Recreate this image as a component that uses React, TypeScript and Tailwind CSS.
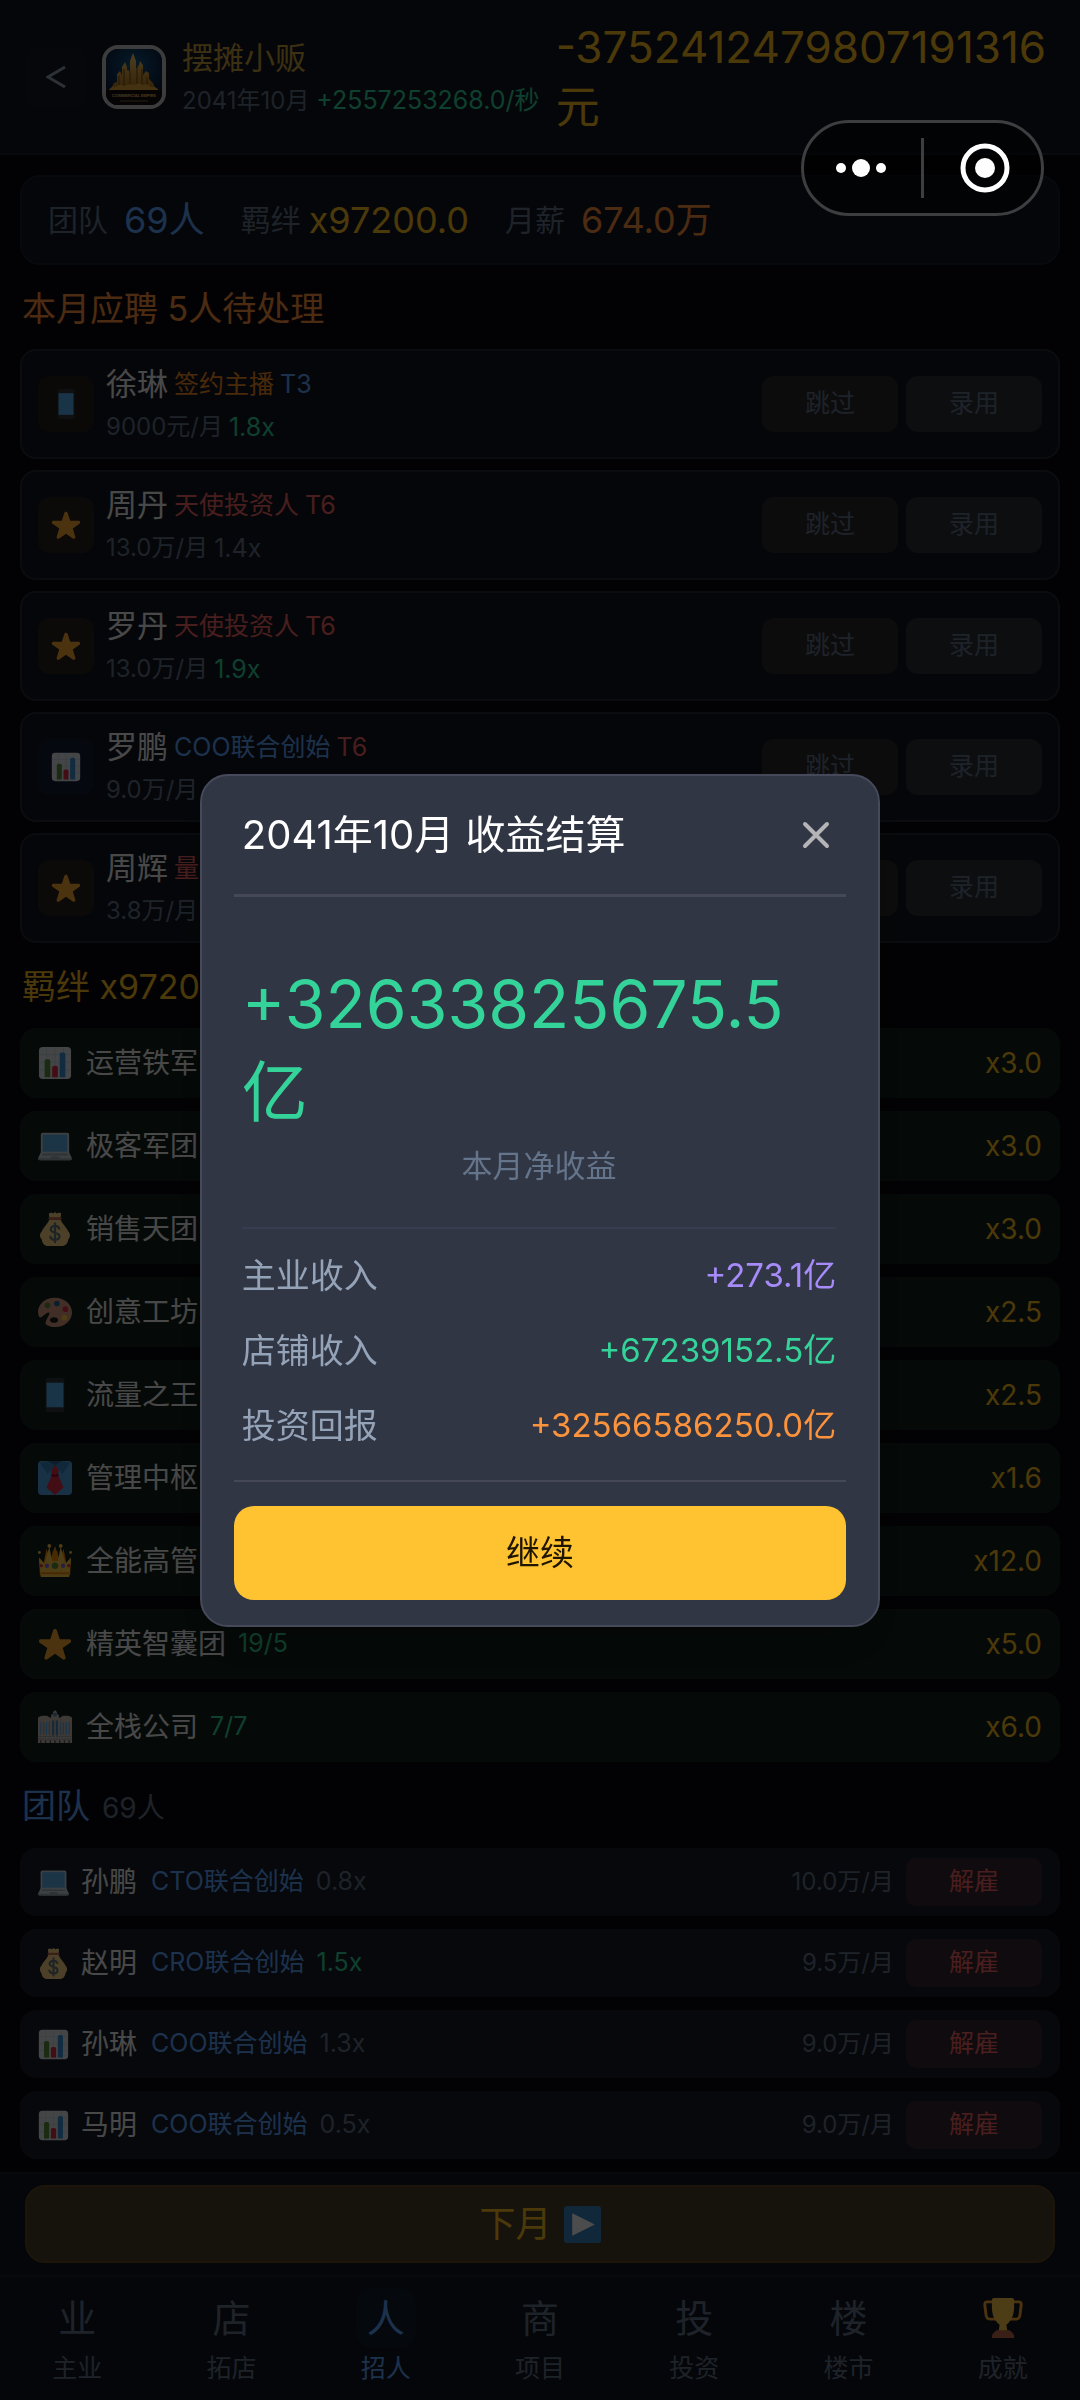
import React, { useState } from "react";

const applicants = [
    { name: "徐琳", role: "签约主播", roleColor: "text-[#f08a24]", tier: "T3", tierColor: "text-[#60a5fa]", salary: "9000元/月", rate: "1.8x", high: true, icon: "phone", tile: "bg-[#262119]" },
    { name: "周丹", role: "天使投资人", roleColor: "text-[#f06464]", tier: "T6", tierColor: "text-[#f06464]", salary: "13.0万/月", rate: "1.4x", high: false, icon: "star", tile: "bg-[#2a1f21]" },
    { name: "罗丹", role: "天使投资人", roleColor: "text-[#f06464]", tier: "T6", tierColor: "text-[#f06464]", salary: "13.0万/月", rate: "1.9x", high: true, icon: "star", tile: "bg-[#2a1f21]" },
    { name: "罗鹏", role: "COO联合创始", roleColor: "text-[#60a5fa]", tier: "T6", tierColor: "text-[#f06464]", salary: "9.0万/月", rate: "", high: false, icon: "chart", tile: "bg-[#161d36]" },
    { name: "周辉", role: "量化", roleColor: "text-[#f06464]", tier: "", tierColor: "", salary: "3.8万/月", rate: "", high: false, icon: "star", tile: "bg-[#2a1f21]" },
];

const bonds = [
    { icon: "chart", name: "运营铁军", count: "", value: "x3.0" },
    { icon: "laptop", name: "极客军团", count: "", value: "x3.0" },
    { icon: "money", name: "销售天团", count: "", value: "x3.0" },
    { icon: "palette", name: "创意工坊", count: "", value: "x2.5" },
    { icon: "phone", name: "流量之王", count: "", value: "x2.5" },
    { icon: "tie", name: "管理中枢", count: "", value: "x1.6" },
    { icon: "crown", name: "全能高管团", count: "", value: "x12.0" },
    { icon: "star", name: "精英智囊团", count: "19/5", value: "x5.0" },
    { icon: "city", name: "全栈公司", count: "7/7", value: "x6.0" },
];

const team = [
    { icon: "laptop", name: "孙鹏", role: "CTO联合创始", rate: "0.8x", high: false, salary: "10.0万/月" },
    { icon: "money", name: "赵明", role: "CRO联合创始", rate: "1.5x", high: true, salary: "9.5万/月" },
    { icon: "chart", name: "孙琳", role: "COO联合创始", rate: "1.3x", high: false, salary: "9.0万/月" },
    { icon: "chart", name: "马明", role: "COO联合创始", rate: "0.5x", high: false, salary: "9.0万/月" },
];

const tabs = [
    { mark: "业", label: "主业" },
    { mark: "店", label: "拓店" },
    { mark: "人", label: "招人" },
    { mark: "商", label: "项目" },
    { mark: "投", label: "投资" },
    { mark: "楼", label: "楼市" },
    { mark: "", label: "成就" },
];

const income = [
    { label: "主业收入", value: "+273.1亿", color: "text-[#a78bfa]" },
    { label: "店铺收入", value: "+67239152.5亿", color: "text-[#34d399]" },
    { label: "投资回报", value: "+32566586250.0亿", color: "text-[#fb923c]" },
];

const drawings: Record<string, React.ReactNode> = {
    star: (
        <path fill="#FFAC33" d="M27.287 34.627c-.404 0-.806-.124-1.152-.371L18 28.422l-8.135 5.834c-.343.247-.75.371-1.148.371-.405 0-.81-.125-1.154-.37-.699-.51-.992-1.412-.722-2.235l3.034-9.792-8.062-5.681c-.696-.508-.985-1.41-.714-2.231.269-.821 1.038-1.376 1.903-1.376l9.931-.014 3.164-9.486C16.34 2.617 17.13 2 18 2s1.66.617 1.903 1.442l3.164 9.486 9.931.014c.865 0 1.634.555 1.903 1.376.271.821-.018 1.723-.714 2.231l-8.062 5.681 3.034 9.792c.27.823-.023 1.725-.722 2.235-.344.245-.748.37-1.148.37z" />
    ),
    phone: (
        <>
            <rect x="8" y="0" width="20" height="36" rx="3" fill="#31373D" />
            <rect x="9" y="5" width="18" height="26" fill="#55ACEE" />
        </>
    ),
    chart: (
        <>
            <rect x="1" y="1" width="34" height="34" rx="4" fill="#E1E8ED" />
            <path d="M1 9h34M1 17h34M1 25h34M9 1v34M18 1v34M27 1v34" stroke="#CCD6DD" strokeWidth="1" />
            <path fill="#5C913B" d="M13 33H7V16c0-1.1.9-2 2-2h2c1.1 0 2 .9 2 2z" />
            <path fill="#DD2E44" d="M21 33h-6V23c0-1.1.9-2 2-2h2c1.1 0 2 .9 2 2z" />
            <path fill="#3B94D9" d="M29 33h-6V9c0-1.1.9-2 2-2h2c1.1 0 2 .9 2 2z" />
        </>
    ),
    laptop: (
        <>
            <path fill="#CCD6DD" d="M33 28H3V6a2 2 0 0 1 2-2h26a2 2 0 0 1 2 2z" />
            <path fill="#5DADEC" d="M5 6h26v18H5z" />
            <path fill="#CCD6DD" d="M33 25H3l-3 6c0 1 .8 2 2 2h32c1.2 0 2-1 2-2z" />
            <path fill="#9AAAB4" d="M5 26h26l1 2H4zM14 29h8l1 2H13zM0 31h36c0 1-.8 2-2 2H2c-1.2 0-2-1-2-2z" />
        </>
    ),
    money: (
        <>
            <path fill="#FDD888" d="M31.9 20.3c-1.4-3.6-6.600-8.400-7.900-12.300H12c-1.300 3.900-6.500 8.700-7.900 12.300C1.500 23 1.500 26.500 4 29c.3 3.700 2.600 7 7 7h14c4.400 0 6.700-3.300 7-7 2.500-2.500 2.500-6-.1-8.700z" />
            <path fill="#FDD888" d="M11.5 1.500 14 .5 16 1.500 18 0l2 1.500L22.500.5 24.500 1.500 24 6H12z" />
            <rect x="11" y="5.5" width="14" height="2.6" rx="1.3" fill="#BF6952" />
            <path d="M22.500 17.500c-.7-2-2.500-2.800-4.500-2.800-2.600 0-4.500 1.400-4.500 3.600 0 5.200 9.200 2.200 9.200 7.400 0 2.300-2 3.700-4.700 3.700-2.500 0-4.400-1-4.900-3.300M18 12v20" fill="none" stroke="#67757F" strokeWidth="2.4" strokeLinecap="round" />
        </>
    ),
    palette: (
        <>
            <path fill="#D99E82" d="M18 3C8 3 0 9.500 0 18c0 1.700.4 3.500 1.200 5 1 1.800 3 .3 5-1.500 2.300-2 4.600-3.500 5.500-3 1.300 1-.5 3.500-2 6.500-1.400 2.700-3 5.700 0 7 2.700 1.300 5.600 2 8.300 2 10 0 18-7 18-15.500S28 3 18 3z" />
            <ellipse cx="17" cy="26.5" rx="4.3" ry="3" fill="#16201b" />
            <circle cx="10" cy="11" r="3" fill="#5C913B" />
            <circle cx="20" cy="9" r="3" fill="#226699" />
            <circle cx="29" cy="15" r="3" fill="#DD2E44" />
            <circle cx="28" cy="24" r="3" fill="#FFCC4D" />
        </>
    ),
    tie: (
        <>
            <rect width="36" height="36" rx="4" fill="#50A5E6" />
            <path fill="#2A6797" d="M10 0h16l-8 5z" />
            <path fill="#3B88C3" d="M2 2 9 0l9 5-8 9zM34 2l-7-2-9 5 8 9z" />
            <path fill="#DD2E44" d="m18 4 4 6-1 4 6 14-9 8-9-8 6-14-1-4z" />
            <path fill="#A0041E" d="m15 13 3 2 3-2 1 3-4 1-4-1z" />
        </>
    ),
    crown: (
        <>
            <path fill="#F4900C" d="m2 33-1-17 5 4 3-15 4 12 5-15 5 15 4-12 3 15 5-4-1 17z" />
            <path fill="#FFCC4D" d="m3 35-2-21 6 7 5-18 3 15h6l3-15 5 18 6-7-2 21z" />
            <path fill="#F4900C" d="M15 8h6l-3 10zM3 30h30v2H3z" />
            <g fill="#FFCC4D"><circle cx="1.5" cy="9" r="1.5" /><circle cx="12" cy="2" r="2" /><circle cx="24" cy="2" r="2" /><circle cx="34.5" cy="9" r="1.5" /></g>
            <circle cx="18" cy="23" r="3.5" fill="#5C913B" />
            <g fill="#9266CC"><circle cx="9.5" cy="23" r="2.3" /><circle cx="26.5" cy="23" r="2.3" /></g>
            <g fill="#DD2E44"><circle cx="3.5" cy="23" r="1.7" /><circle cx="32.5" cy="23" r="1.7" /></g>
        </>
    ),
    city: (
        <>
            <path fill="#CCBFB5" d="M0 9q0-2 2-2l2-1h6l2 2h2V5l2-1V2l2-2 2 2v2l2 1v3h2l2-2h6l2 1q2 0 2 2v26H0z" />
            <path d="M3 13v13M6 13v13M9 13v13M12 13v13M24 13v13M27 13v13M30 13v13M33 13v13" stroke="#55ACEE" strokeWidth="1.2" />
            <path d="M16 11v16M20 11v16" stroke="#4289C1" strokeWidth="2.2" />
            <path d="M1 28h34M1 31h34" stroke="#8899A6" strokeWidth="1.2" strokeDasharray="2 1" />
            <path d="M3 32v3M8 32v3M13 32v3M18 32v3M23 32v3M28 32v3M33 32v3" stroke="#66564c" strokeWidth="1.5" />
            <circle cx="18" cy="5" r="2" fill="#4289C1" />
        </>
    ),
    play: (
        <>
            <rect width="36" height="36" rx="3" fill="#3B88C3" />
            <path fill="#FFFFFF" d="M8 7v22l22-11z" />
        </>
    ),
    trophy: (
        <>
            <path fill="none" stroke="#FFAC33" strokeWidth="2.6" strokeLinejoin="round" d="M10 3.500H3.500C1.500 3.500 1.500 5 1.700 7l1 8c.3 2.500 1.300 4 3.300 4h6M26 3.500h6.500c2 0 2 1.500 1.800 3.500l-1 8c-.3 2.500-1.300 4-3.300 4h-6" />
            <path fill="#FFCC4D" d="M8 2q0-2 2-2h16q2 0 2 2v6c0 8-3 13-7 16l1 6h-8l1-6C11 21 8 16 8 8z" />
            <path fill="#C1694F" d="M12 29h12l3 3 1 2v2H8v-2l1-2z" />
        </>
    ),
};

const Icon = ({ name, className }: { name: string; className: string }) => (
    <svg viewBox="0 0 36 36" className={`shrink-0 ${className}`} aria-hidden="true">
        {drawings[name]}
    </svg>
);

const Logo = () => (
    <svg viewBox="0 0 56 56" className="size-full" role="img" aria-label="Commercial Empire">
        <defs>
            <radialGradient id="sky" cx="50%" cy="30%" r="70%">
                <stop offset="0" stopColor="#175a8c" />
                <stop offset="1" stopColor="#06122e" />
            </radialGradient>
            <linearGradient id="gold" x1="0" y1="0" x2="0" y2="1">
                <stop offset="0" stopColor="#ffd873" />
                <stop offset="1" stopColor="#a9690f" />
            </linearGradient>
        </defs>
        <rect width="56" height="56" fill="url(#sky)" />
        <path fill="url(#gold)" d="M4 42 8 34l3-1v-8l3-3 2 4v-8l3-5 2 5v3l3 1V12l3-8 3 8v8l3-4 1-4 3 4v10l3-4 3 2v6l4 4 4 10z" />
        <path stroke="#7a4c10" strokeWidth="1" d="M13 27v12M18 20v18M24 22v16M31 16v22M36 20v18M41 28v10" />
        <path fill="#e5a63a" d="M2 42q4-6 8-4 4-4 8-1 5-3 10-1 5-3 9 0 5-2 8 2 5-1 8 4z" />
        <rect y="41" width="56" height="15" fill="#120d0c" />
        <text x="28" y="48" textAnchor="middle" fontSize="4" fontWeight="700" fill="#e0b870">COMMERCIAL EMPIRE</text>
        <path d="M14 52h28" stroke="#7d6740" strokeWidth="1" />
    </svg>
);

const Header = () => (
    <header className="flex items-center border-b-2 border-[#1f242e] bg-[#11161f] h-[155px] pl-[26px] pr-8 shrink-0">
        <button aria-label="返回" className="size-[60px] shrink-0 rounded-xl bg-[#171a24] flex items-center justify-center">
            <svg viewBox="0 0 20 24" className="w-5 h-6" fill="none" stroke="#94a3b8" strokeWidth="3">
                <path d="M19 2 2 12l17 10" />
            </svg>
        </button>
        <div className="size-16 ml-4 shrink-0 rounded-2xl border-4 border-[#c8c8c8] overflow-hidden">
            <Logo />
        </div>
        <div className="ml-4 pt-2 whitespace-nowrap">
            <h1 className="text-[31px] leading-10 text-[#c9a03f]">摆摊小贩</h1>
            <p className="text-2xl leading-[44px] text-[#64748b]">
                2041年10月 <span className="text-[25px] text-[#34d399]">+2557253268.0/秒</span>
            </p>
        </div>
        <div className="ml-4 flex-1 text-[44px] leading-[60px] text-[#fbbf24]">-3752412479807191316元</div>
    </header>
);

const Summary = () => (
    <section className="flex items-center h-[90px] rounded-[20px] border-2 border-[#141f2e] bg-[#0e1621] px-[26px] text-[30px] text-[#64748b]">
        <span>团队</span>
        <span className="ml-4 text-4xl text-[#60a5fa]">69人</span>
        <span className="ml-9">羁绊</span>
        <span className="ml-2 text-4xl text-[#fbbf24]">x97200.0</span>
        <span className="ml-9">月薪</span>
        <span className="ml-4 text-4xl text-[#fb923c]">674.0万</span>
    </section>
);

const Applicants = () => (
    <section>
        <h2 className="mt-[19px] text-[34px] leading-[50px] text-[#fb923c] px-0.5">本月应聘 5人待处理</h2>
        <ul className="mt-[15px] space-y-[11px]">
            {applicants.map((item) => (
                <li key={item.name} className="flex items-center h-[110px] rounded-2xl border-2 border-[#222a33] bg-[#11161f] px-4">
                    <div className={`size-14 rounded-xl flex items-center justify-center ${item.tile}`}>
                        <Icon name={item.icon} className="size-[30px]" />
                    </div>
                    <div className="ml-3 pt-0.5 flex-1">
                        <p className="flex items-center gap-1.5 leading-[44px] text-[25px]">
                            <span className="text-[31px] text-[#f0f0f0]">{item.name}</span>
                            <span className={item.roleColor}>{item.role}</span>
                            <span className={item.tierColor}>{item.tier}</span>
                        </p>
                        <p className="flex items-center gap-1.5 leading-[42px] text-2xl text-[#64748b]">
                            {item.salary}
                            <span className={item.high ? "text-[25px] text-[#34d399]" : "text-[25px]"}>{item.rate}</span>
                        </p>
                    </div>
                    <button className="w-[136px] h-14 rounded-xl bg-[#2a2a2d] text-[25px] text-[#64748b]">跳过</button>
                    <button className="ml-2 w-[136px] h-14 rounded-xl bg-[#2b2f38] text-[25px] text-[#64748b]">录用</button>
                </li>
            ))}
        </ul>
    </section>
);

const Bonds = () => (
    <section>
        <h2 className="mt-[19px] text-[34px] leading-[50px] text-[#fbbf24] px-0.5">羁绊 x97200.0</h2>
        <ul className="mt-4 space-y-[13px]">
            {bonds.map((bond) => (
                <li key={bond.name} className="flex items-center h-[70px] rounded-2xl bg-[#111f1a] px-[18px] text-[28px]">
                    <Icon name={bond.icon} className="size-[34px]" />
                    <span className="ml-3.5 text-[#f0f0f0]">{bond.name}</span>
                    <span className="ml-3 text-[25px] text-[#34d399]">{bond.count}</span>
                    <span className="ml-auto text-[#fbbf24]">{bond.value}</span>
                </li>
            ))}
        </ul>
    </section>
);

const Team = () => (
    <section>
        <h2 className="mt-[19px] text-[34px] leading-[50px] text-[#60a5fa] px-0.5">
            团队<span className="ml-3 text-[28px] text-[#64748b]">69人</span>
        </h2>
        <ul className="mt-[15px] space-y-[13px]">
            {team.map((member) => (
                <li key={member.name} className="flex items-center h-[68px] rounded-2xl bg-[#171c26] px-[18px] text-[25px]">
                    <Icon name={member.icon} className="size-[31px]" />
                    <span className="ml-3 text-[28px] text-[#f0f0f0]">{member.name}</span>
                    <span className="ml-3.5 text-[#60a5fa]">{member.role}</span>
                    <span className={`ml-3 ${member.high ? "text-[#34d399]" : "text-[#64748b]"}`}>{member.rate}</span>
                    <span className="ml-auto text-2xl text-[#64748b]">{member.salary}</span>
                    <button className="ml-3 w-[136px] h-12 rounded-[10px] bg-[#382530] text-[#f06464]">解雇</button>
                </li>
            ))}
            <li className="h-[68px] rounded-2xl bg-[#171c26]" />
        </ul>
    </section>
);

const BottomBar = () => {
    const [active, setActive] = useState("招人");

    return (
        <footer className="shrink-0 bg-[#11161f]">
            <div className="border-t-2 border-[#1c212a] px-[25px] pt-[11px] pb-3">
                <button className="w-full h-[78px] rounded-[20px] border-2 border-[#62491f] bg-[#4b3e28] flex items-center justify-center gap-3 text-4xl text-[#fbbf24]">
                    下月
                    <Icon name="play" className="size-[37px]" />
                </button>
            </div>
            <nav className="flex border-t-2 border-[#1c212a] pt-[11px] pb-3">
                {tabs.map((tab) => {
                    const on = tab.label === active;
                    return (
                        <button key={tab.label} onClick={() => setActive(tab.label)} className={`flex-1 flex flex-col items-center ${on ? "text-[#60a5fa]" : "text-[#64748b]"}`}>
                            <span className={`size-[60px] rounded-2xl flex items-center justify-center text-[38px] leading-none ${on ? "bg-[#121e2d]" : ""}`}>
                                {tab.mark || <Icon name="trophy" className="size-10" />}
                            </span>
                            <span className="text-[25px] leading-10">{tab.label}</span>
                        </button>
                    );
                })}
            </nav>
        </footer>
    );
};

const Settlement = ({ onClose }: { onClose: () => void }) => (
    <div className="fixed inset-0 bg-black/70 flex items-center justify-center">
        <div role="dialog" aria-labelledby="settlement-title" className="w-[63%] rounded-[28px] border-2 border-[#454959] bg-[#313644] px-8 pb-[25px] shadow-2xl">
            <div className="flex items-center justify-between h-[121px] border-b-3 border-[#454857] pl-2 pr-2">
                <h2 id="settlement-title" className="text-[40px] text-white">2041年10月 收益结算</h2>
                <button aria-label="关闭" onClick={onClose} className="p-2">
                    <svg viewBox="0 0 28 28" className="size-7" stroke="#b4b4b6" strokeWidth="4" strokeLinecap="round">
                        <path d="M3 3l22 22M25 3 3 25" />
                    </svg>
                </button>
            </div>
            <div className="pl-2 pr-2.5">
                <p className="pt-[63px] text-[66px] leading-[88px] text-[#34d399]">+32633825675.5亿</p>
                <p className="text-center text-[31px] leading-[60px] text-[#64748b]">本月净收益</p>
                <dl className="mt-[31px] border-t-2 border-[#363d4e] pt-[9px] pb-[17px]">
                    {income.map((row) => (
                        <div key={row.label} className="flex justify-between text-[34px] leading-[75px]">
                            <dt className="text-[#94a3b8]">{row.label}</dt>
                            <dd className={`text-[33px] ${row.color}`}>{row.value}</dd>
                        </div>
                    ))}
                </dl>
            </div>
            <div className="border-t-2 border-[#454857] pt-6">
                <button onClick={onClose} className="w-full h-[94px] rounded-[20px] bg-[#ffc331] text-[34px] text-[#1f1500]">继续</button>
            </div>
        </div>
    </div>
);

const Capsule = () => (
    <div className="fixed top-[120px] right-9 w-[243px] h-24 rounded-full border-3 border-[#3d3e40] bg-black/50 flex items-center">
        <button aria-label="更多" className="flex-1 flex justify-center pr-1">
            <svg viewBox="0 0 52 20" className="w-[52px] h-5" fill="#fff">
                <circle cx="6" cy="10" r="5" />
                <circle cx="26" cy="10" r="9" />
                <circle cx="46" cy="10" r="5" />
            </svg>
        </button>
        <span className="w-[3px] h-[60px] bg-[#3d3e40]" />
        <button aria-label="关闭小程序" className="flex-1 flex justify-center pl-1">
            <svg viewBox="0 0 50 50" className="size-[50px]">
                <circle cx="25" cy="25" r="22" fill="none" stroke="#fff" strokeWidth="5" />
                <circle cx="25" cy="25" r="10" fill="#fff" />
            </svg>
        </button>
    </div>
);

const App: React.FC = () => {
    const [open, setOpen] = useState(true);

    return (
        <div className="h-screen flex flex-col bg-[#08080e] font-['Inter','Noto_Sans_CJK_SC',sans-serif]">
            <Header />
            <main className="flex-1 min-h-0 overflow-y-auto [scrollbar-width:none] px-5 pt-5">
                <Summary />
                <Applicants />
                <Bonds />
                <Team />
            </main>
            <BottomBar />
            {open && <Settlement onClose={() => setOpen(false)} />}
            <Capsule />
        </div>
    );
};

export default App;
